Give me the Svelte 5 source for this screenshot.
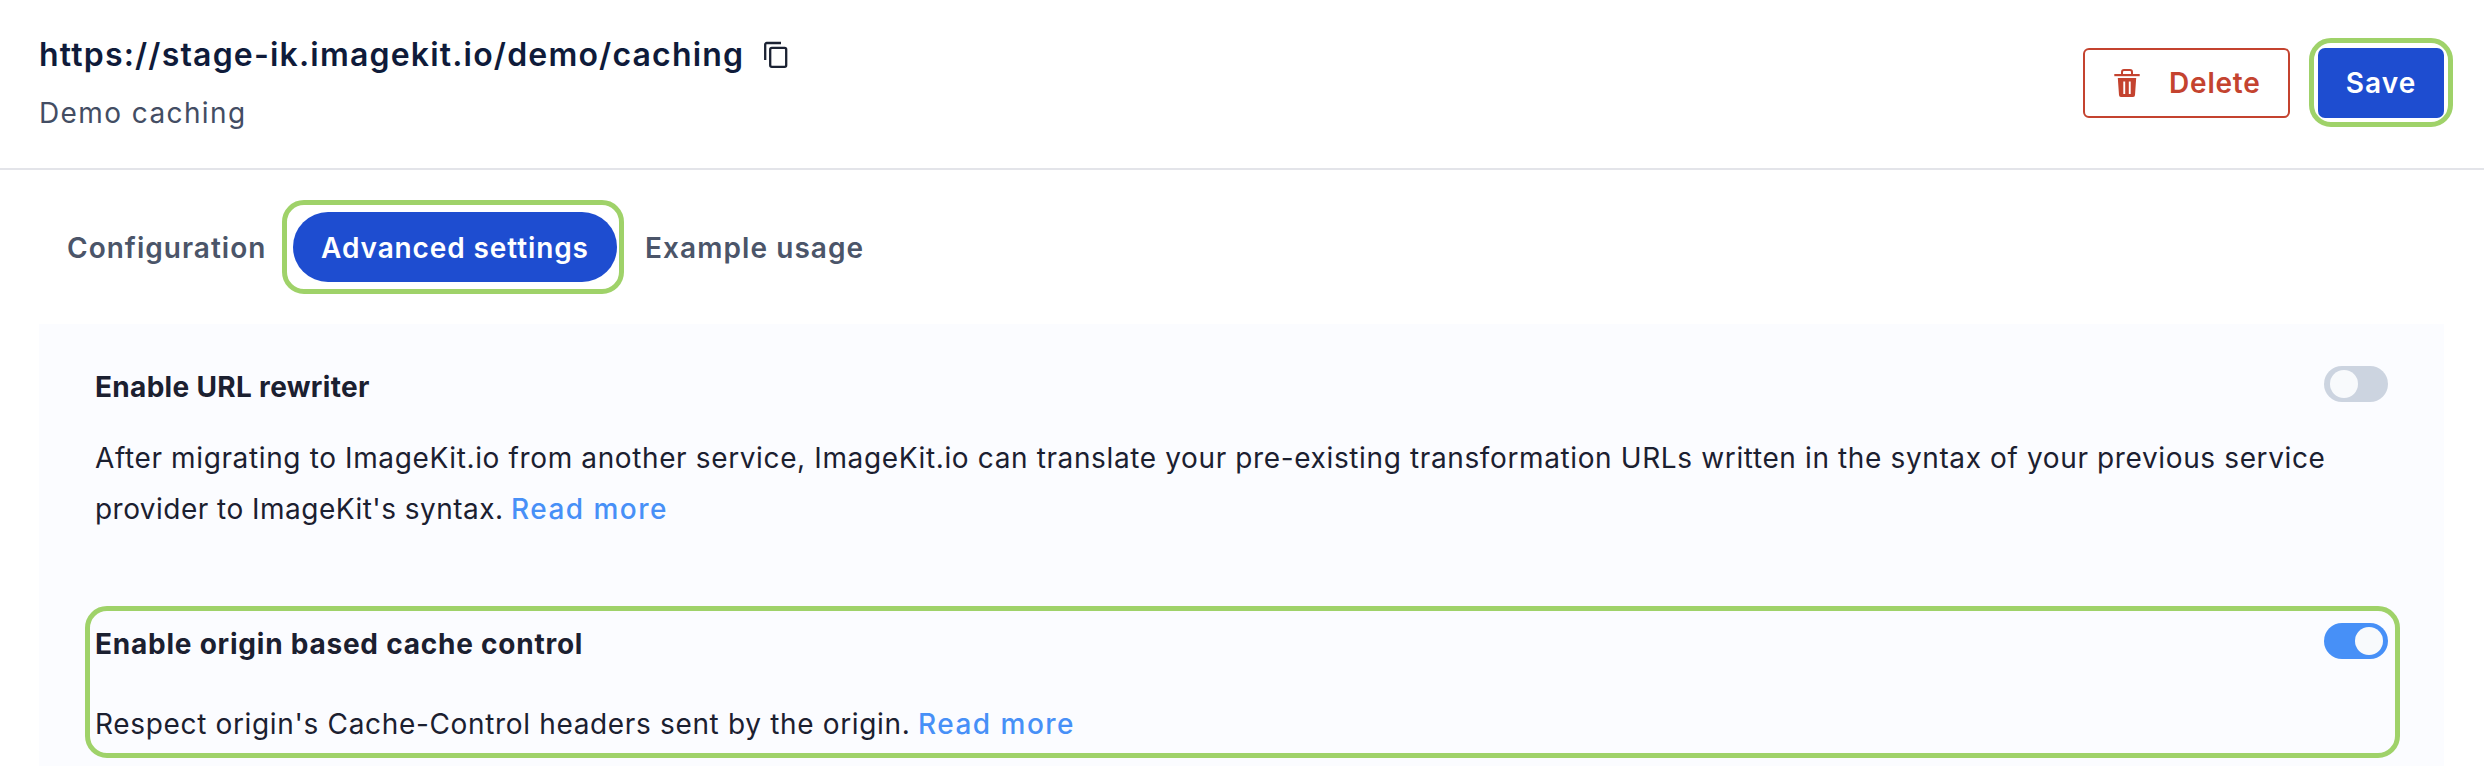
<script>
  let rewriter = $state(false);
  let originCache = $state(true);
</script>

<div class="page">
  <header>
    <div class="heading">
      <div class="title-row">
        <h1>https://stage-ik.imagekit.io/demo/caching</h1>
        <svg class="copy" width="26" height="30" viewBox="0 0 26 30" fill="none" stroke="#1b2233" stroke-width="2.3">
          <path d="M2.2 20V4.5a1.5 1.5 0 0 1 1.5-1.5H18" />
          <rect x="7.2" y="7.8" width="16" height="19" rx="1.6" />
        </svg>
      </div>
      <p class="subtitle">Demo caching</p>
    </div>
    <div class="actions">
      <button class="delete">
        <svg width="26" height="28" viewBox="0 0 26 28">
          <path d="M8 5.500V3A2 2 0 0 1 10 1h6a2 2 0 0 1 2 2v2.500" fill="none" stroke="#c4432f" stroke-width="2" />
          <path d="M.3 5h25.400v2.200H.3z" fill="#c4432f" />
          <path fill-rule="evenodd" d="M3.800 9h18.400l-1.200 17a2 2 0 0 1-2 2H7a2 2 0 0 1-2-2zM9.300 12.500V25h1.900V12.500zM14.800 12.500V25h1.900V12.500z" fill="#c4432f" />
        </svg>
        <span>Delete</span>
      </button>
      <div class="ring save-ring"><button class="save">Save</button></div>
    </div>
  </header>

  <nav>
    <button class="tab config">Configuration</button>
    <div class="ring tab-ring"><button class="tab active">Advanced settings</button></div>
    <button class="tab usage">Example usage</button>
  </nav>

  <main>
    <section>
      <div class="row">
        <h2 class="rewriter">Enable URL rewriter</h2>
        <button class="toggle" class:on={rewriter} onclick={() => (rewriter = !rewriter)} aria-label="Enable URL rewriter"><i></i></button>
      </div>
      <p class="text">After migrating to ImageKit.io from another service, ImageKit.io can translate your pre-existing transformation URLs written in the syntax of your previous service <span class="tail">provider to ImageKit's syntax.</span> <a href="#rewriter">Read more</a></p>
    </section>
    <section class="ring highlighted">
      <div class="row">
        <h2>Enable origin based cache control</h2>
        <button class="toggle" class:on={originCache} onclick={() => (originCache = !originCache)} aria-label="Enable origin based cache control"><i></i></button>
      </div>
      <p class="text respect">Respect origin's Cache-Control headers sent by the origin. <a href="#cache">Read more</a></p>
    </section>
  </main>
</div>

<style>
  :global(body) { background: #fff; }
  .page {
    box-sizing: border-box;
    width: 2484px;
    height: 766px;
    overflow: hidden;
    display: flex;
    flex-direction: column;
    font-family: Inter, "Open Sans", sans-serif;
    font-size: 28px;
  }
  h1, h2, p { margin: 0; }
  button { font: inherit; border: 0; padding: 0; background: none; white-space: nowrap; cursor: pointer; }
  .ring { border: 5px solid #9fd269; border-radius: 22px; box-sizing: border-box; }

  header {
    box-sizing: border-box;
    height: 170px;
    flex: none;
    display: flex;
    justify-content: space-between;
    align-items: flex-start;
    padding: 31px 31px 0 39px;
    border-bottom: 2px solid #e3e4e9;
  }
  .title-row { display: flex; align-items: center; height: 48px; gap: 19px; }
  h1 { font-size: 32px; line-height: 48px; font-weight: 600; letter-spacing: 1.185px; color: #0f1b3a; }
  .subtitle { margin-top: 13px; line-height: 42px; letter-spacing: 1.4px; color: #434d63; }
  .actions { display: flex; align-items: center; gap: 19px; margin-top: 7px; height: 89px; }
  .delete {
    box-sizing: border-box;
    width: 207px;
    height: 70px;
    margin-top: 1px;
    display: flex;
    align-items: center;
    gap: 29px;
    padding-left: 29px;
    border: 2px solid #c4432f;
    border-radius: 6px;
    color: #c4432f;
    font-weight: 600;
    letter-spacing: 0.8px;
  }
  .save-ring { width: 144px; height: 89px; display: flex; align-items: center; justify-content: center; }
  .save {
    width: 126px;
    height: 70px;
    margin-top: 1px;
    border-radius: 7px;
    background: #1e4dd0;
    color: #fff;
    font-weight: 600;
    letter-spacing: 1.087px;
  }

  nav { display: flex; align-items: center; height: 94px; margin-top: 30px; padding-left: 67px; flex: none; }
  .tab { height: 70px; padding-top: 1px; font-weight: 600; color: #4b5569; text-align: left; }
  .config { width: 215px; letter-spacing: 1.02px; }
  .tab-ring { width: 342px; height: 94px; padding: 7px 2px 7px 6px; display: flex; }
  .active { flex: 1; border-radius: 35px; background: #1e4dd0; color: #fff; text-align: center; letter-spacing: 0.89px; }
  .usage { margin-left: 21px; letter-spacing: 1.08px; }

  main {
    box-sizing: border-box;
    width: 2405px;
    height: 442px;
    flex: none;
    margin: 30px 0 0 39px;
    padding: 38px 44px 0 46px;
    background: #fbfcff;
  }
  section { padding: 0 12px 0 10px; }
  .row { display: flex; justify-content: space-between; align-items: flex-start; height: 50px; }
  h2 { font-size: 28px; line-height: 51px; font-weight: 700; letter-spacing: 0.77px; color: #1b2030; }
  h2.rewriter { letter-spacing: 0.319px; }
  .toggle {
    box-sizing: border-box;
    display: flex;
    width: 64px;
    height: 36px;
    margin-top: 4px;
    padding: 4px 5px 4px 6px;
    border-radius: 18px;
    background: #ccd4e0;
  }
  .toggle.on { background: #4790f7; justify-content: flex-end; }
  .toggle i { width: 28px; height: 28px; border-radius: 50%; background: #f8fafc; }
  .text { margin-top: 21px; line-height: 51px; letter-spacing: 0.625px; color: #1b2030; }
  .tail { letter-spacing: 0.47px; }
  .respect { margin-top: 30px; letter-spacing: 0.66px; }
  a { margin-left: -1px; color: #4790f7; font-weight: 500; letter-spacing: 1.48px; text-decoration: none; }
  .highlighted { height: 152px; margin-top: 71px; padding: 8px 7px 0 5px; }
</style>
